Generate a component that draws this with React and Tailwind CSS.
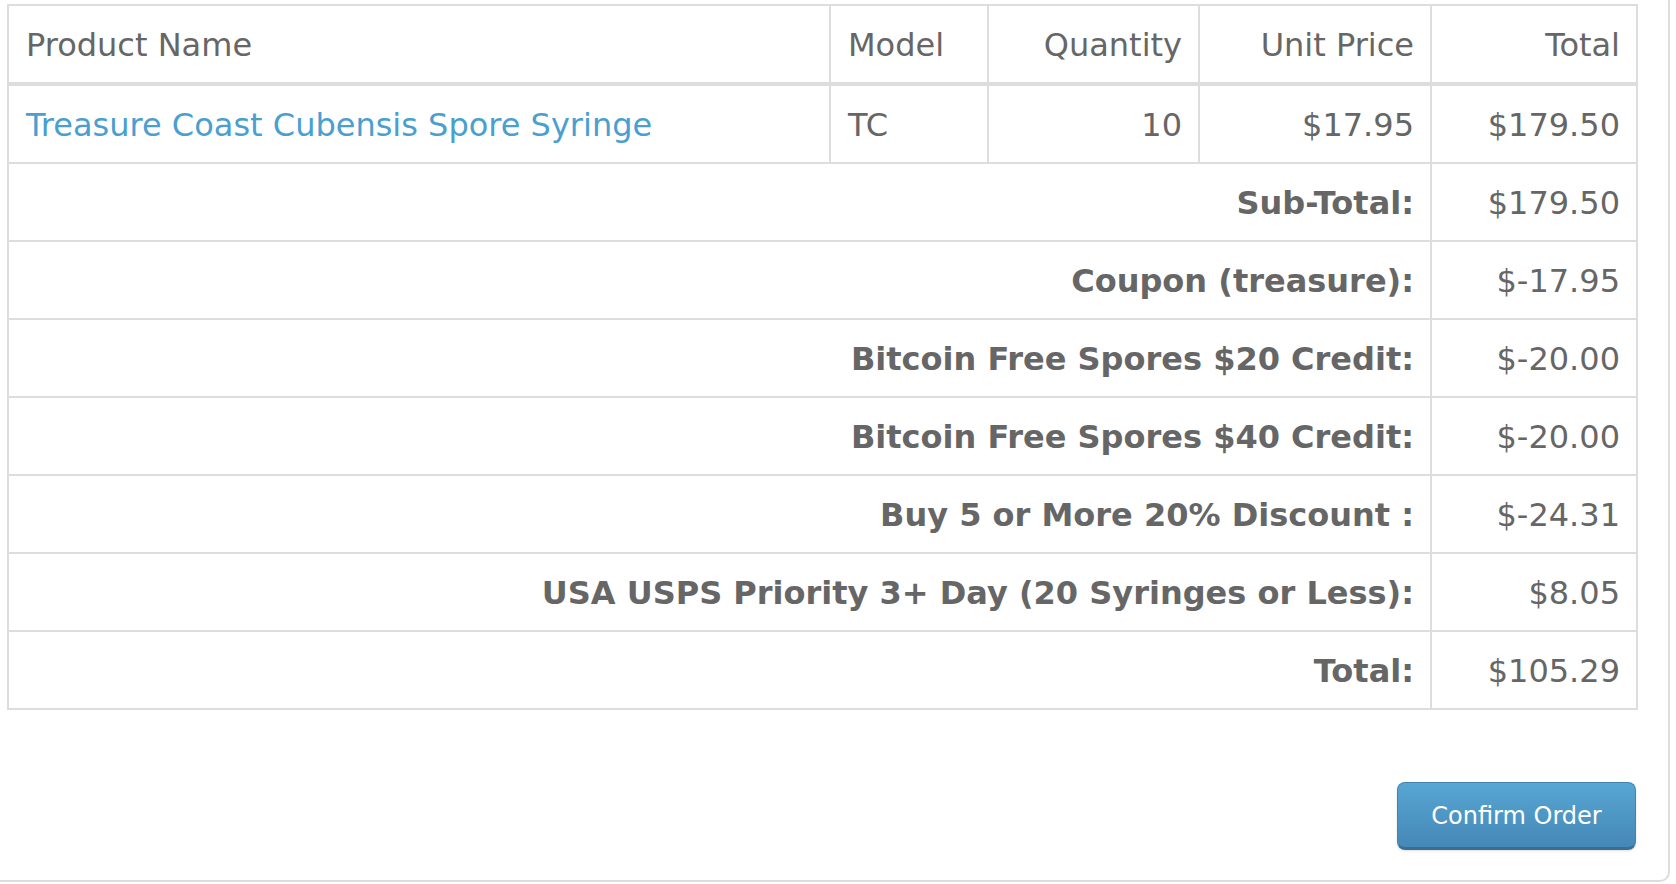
import React from "react";

const items = [
  { name: "Treasure Coast Cubensis Spore Syringe", model: "TC", qty: 10, price: "$17.95", total: "$179.50" },
];

const totals = [
  { label: "Sub-Total:", value: "$179.50" },
  { label: "Coupon (treasure):", value: "$-17.95" },
  { label: "Bitcoin Free Spores $20 Credit:", value: "$-20.00" },
  { label: "Bitcoin Free Spores $40 Credit:", value: "$-20.00" },
  { label: "Buy 5 or More 20% Discount :", value: "$-24.31" },
  { label: "USA USPS Priority 3+ Day (20 Syringes or Less):", value: "$8.05" },
  { label: "Total:", value: "$105.29" },
];

const cell = "border-2 border-[#dddddd] pl-[17px] pr-[16px] pt-[2px] pb-0 leading-[74px] whitespace-nowrap";

export default function App() {
  return (
    <div className="w-[1670px] h-[882px] bg-white border-r-2 border-b-2 border-[#dddddd] rounded-br-[10px] pl-[7px] pt-[4px] font-['DejaVu_Sans','Verdana',sans-serif] text-[#666666]">
      <table className="w-[1629px] table-fixed border-collapse text-[32px]">
        <colgroup>
          <col className="w-[822px]" />
          <col className="w-[158px]" />
          <col className="w-[211px]" />
          <col className="w-[232px]" />
          <col className="w-[206px]" />
        </colgroup>
        <thead>
          <tr>
            <th className={`${cell} border-b-4 text-left font-normal`}>Product Name</th>
            <th className={`${cell} border-b-4 text-left font-normal`}>Model</th>
            <th className={`${cell} border-b-4 text-right font-normal`}>Quantity</th>
            <th className={`${cell} border-b-4 text-right font-normal`}>Unit Price</th>
            <th className={`${cell} border-b-4 text-right font-normal`}>Total</th>
          </tr>
        </thead>
        <tbody>
          {items.map((it) => (
            <tr key={it.name}>
              <td className={`${cell} text-left`}>
                <a href="#" className="text-[#4a9fd0]">{it.name}</a>
              </td>
              <td className={`${cell} text-left`}>{it.model}</td>
              <td className={`${cell} text-right`}>{it.qty}</td>
              <td className={`${cell} text-right`}>{it.price}</td>
              <td className={`${cell} text-right`}>{it.total}</td>
            </tr>
          ))}
        </tbody>
        <tfoot>
          {totals.map((t) => (
            <tr key={t.label}>
              <td colSpan={4} className={`${cell} text-right font-bold`}>{t.label}</td>
              <td className={`${cell} text-right`}>{t.value}</td>
            </tr>
          ))}
        </tfoot>
      </table>

      <div className="flex justify-end w-[1629px] mt-[72px]">
        <button
          type="button"
          className="w-[239px] h-[68px] pt-[2px] rounded-[8px] bg-gradient-to-b from-[#57a6d3] to-[#4588b7] border border-[#4283b0] border-b-[3px] border-b-[#3a6f94] text-white text-[24px] shadow-sm"
        >
          Confirm Order
        </button>
      </div>
    </div>
  );
}
